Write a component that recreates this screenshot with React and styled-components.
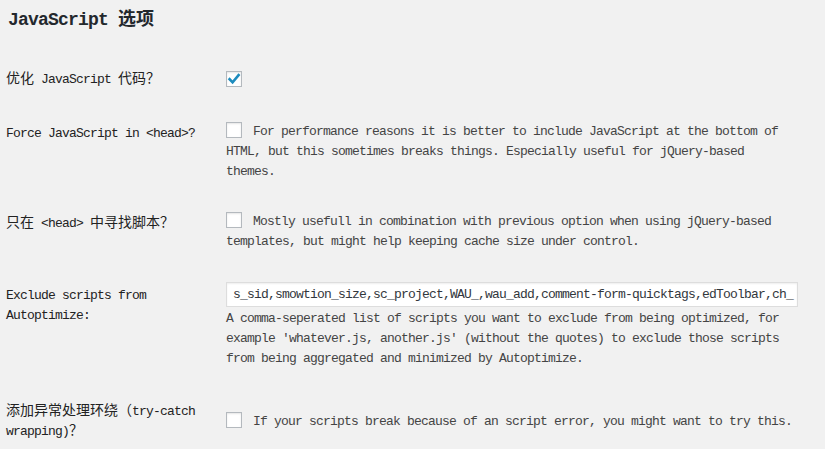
import React from 'react'
import styled, { createGlobalStyle } from 'styled-components'

const GlobalStyle = createGlobalStyle`
  html, body {
    margin: 0;
    padding: 0;
    background: #f1f1f1;
  }
  body {
    font-family: "Liberation Mono", "Noto Sans CJK SC", monospace;
    color: #333;
  }
`

const EXCLUDES = 's_sid,smowtion_size,sc_project,WAU_,wau_add,comment-form-quicktags,edToolbar,ch_'

const rows = [
  {
    label: [['han', '优化'], ' JavaScript ', ['han', '代码？']],
    checked: true,
    top: 38,
    thPad: 0,
    tdPad: 0,
  },
  {
    label: ['Force JavaScript in <head>?'],
    desc: 'For performance reasons it is better to include JavaScript at the bottom of HTML, but this sometimes breaks things. Especially useful for jQuery-based themes.',
    top: 32,
    thPad: 2,
    tdPad: 0,
  },
  {
    label: [['han', '只在'], ' <head> ', ['han', '中寻找脚本？']],
    desc: 'Mostly usefull in combination with previous option when using jQuery-based templates, but might help keeping cache size under control.',
    top: 30,
    thPad: 2,
    tdPad: 0,
  },
  {
    label: ['Exclude scripts from ', 'Autoptimize:'],
    input: EXCLUDES,
    desc: "A comma-seperated list of scripts you want to exclude from being optimized, for example 'whatever.js, another.js' (without the quotes) to exclude those scripts from being aggregated and minimized by Autoptimize.",
    top: 30,
    thPad: 4,
    tdPad: 0,
  },
  {
    label: [['han', '添加异常处理环绕（'], 'try-catch ', 'wrapping)', ['han', '？']],
    desc: 'If your scripts break because of an script error, you might want to try this.',
    top: 33,
    thPad: 0,
    tdPad: 10,
  },
]

const renderLabel = parts =>
  parts.map((p, i) => (Array.isArray(p) ? <Han key={i}>{p[1]}</Han> : <span key={i}>{p}</span>))

const Check = ({ checked }) => (
  <Box>
    {checked && (
      <svg width="14" height="14" viewBox="0 0 14 14">
        <path d="M2.6 7.2 L5.6 10.4 L11.6 3.2" fill="none" stroke="#1e8cbe" strokeWidth="2.6" strokeLinecap="square" />
      </svg>
    )}
  </Box>
)

export default () => (
  <Page>
    <GlobalStyle />
    <Heading>
      JavaScript <HeadHan>选项</HeadHan>
    </Heading>
    {rows.map((r, i) => (
      <Row key={i} $top={r.top}>
        <Th $pad={r.thPad}>{renderLabel(r.label)}</Th>
        <Td $pad={r.tdPad}>
          {r.input ? (
            <>
              <TextInput>{r.input}</TextInput>
              <Desc $gap={2}>{r.desc}</Desc>
            </>
          ) : (
            <Desc>
              <Check checked={r.checked} />
              {r.desc}
            </Desc>
          )}
        </Td>
      </Row>
    ))}
  </Page>
)

const Page = styled.div`
  padding: 8px 30px 0 6px;
`

const Heading = styled.h2`
  margin: 0;
  font-size: 18px;
  letter-spacing: -0.8px;
  line-height: 24px;
  font-weight: bold;
  color: #23282d;
  padding-left: 2px;
`

const HeadHan = styled.span`
  font-size: 18px;
  letter-spacing: 0;
  line-height: 1;
`

const Han = styled.span`
  font-size: 14px;
  letter-spacing: 0;
  line-height: 1;
`

const Row = styled.div`
  display: flex;
  align-items: flex-start;
  margin-top: ${p => p.$top}px;
`

const Th = styled.div`
  width: 200px;
  flex: none;
  padding: ${p => p.$pad}px 10px 0 0;
  font-size: 13px;
  letter-spacing: -0.8px;
  line-height: 20px;
  color: #222;
`

const Td = styled.div`
  flex: 1;
  min-width: 0;
  padding: ${p => p.$pad}px 0 0 10px;
`

const Desc = styled.div`
  font-size: 13px;
  letter-spacing: -0.8px;
  line-height: 20px;
  color: #444;
  margin-top: ${p => p.$gap || 0}px;
`

const Box = styled.span`
  display: inline-flex;
  align-items: center;
  justify-content: center;
  box-sizing: border-box;
  width: 16px;
  height: 16px;
  margin-right: 11px;
  vertical-align: -3px;
  background: #fff;
  border: 1px solid #b4b9be;
  box-shadow: inset 0 1px 2px rgba(0, 0, 0, 0.1);
`

const TextInput = styled.div`
  box-sizing: border-box;
  width: 572px;
  height: 25px;
  padding: 0 6px;
  background: #fff;
  border: 1px solid #ddd;
  box-shadow: inset 0 1px 2px rgba(0, 0, 0, 0.07);
  font-size: 13px;
  letter-spacing: -0.8px;
  line-height: 23px;
  color: #32373c;
  white-space: nowrap;
  overflow: hidden;
`
